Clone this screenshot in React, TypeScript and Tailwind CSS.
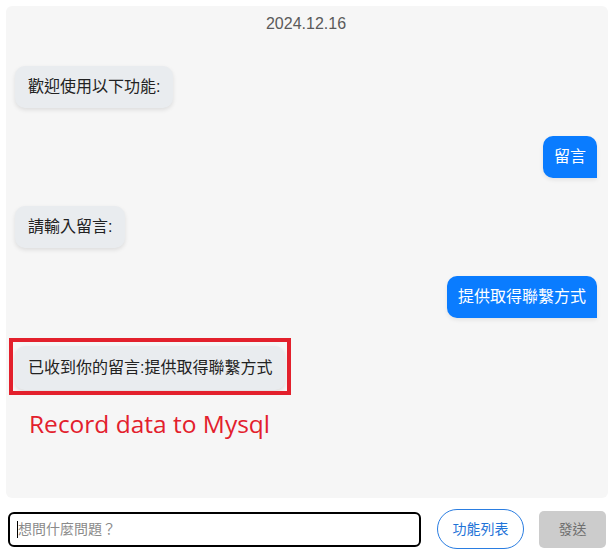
import React from "react";

const font = "font-['Liberation_Sans','Noto_Sans_CJK_TC',sans-serif]";

function Left({ text }: { text: string }) {
  return (
    <div className="flex">
      <div className="h-[42px] px-[13px] flex items-center rounded-[10px] bg-[#e9ecef] text-[16px] leading-[24px] text-[#222] shadow-[0_2px_4px_rgba(0,0,0,0.1)]">
        {text}
      </div>
    </div>
  );
}

function Right({ text }: { text: string }) {
  return (
    <div className="flex justify-end">
      <div className="h-[42px] px-[11px] flex items-center rounded-[10px] rounded-br-none bg-[#0a7cff] text-[16px] leading-[24px] text-white shadow-[0_2px_4px_rgba(0,0,0,0.08)]">
        {text}
      </div>
    </div>
  );
}

export default function App() {
  return (
    <div className={`w-[614px] h-[559px] bg-white ${font} flex flex-col`}>
      <div className="mx-[6px] mt-[6px] h-[492px] bg-[#f6f6f6] rounded-[6px] pl-[9px] pr-[11px] pt-[6px] flex flex-col gap-[28px]">
        <div className="text-center text-[16px] leading-[24px] text-[#5a5a5a] mb-[2px]">2024.12.16</div>
        <Left text="歡迎使用以下功能:" />
        <Right text="留言" />
        <Left text="請輸入留言:" />
        <Right text="提供取得聯繫方式" />
        <div className="flex flex-col">
          <div className="flex">
            <div className="relative">
              <div className="h-[44px] px-[13px] flex items-center rounded-[10px] bg-[#e9ecef] text-[16px] leading-[24px] text-[#222] shadow-[0_2px_4px_rgba(0,0,0,0.1)]">
                已收到你的留言:提供取得聯繫方式
              </div>
              <div className="absolute left-[-6px] right-[-6px] top-[-8px] bottom-[-5px] border-[4px] border-[#e3202c]"></div>
            </div>
          </div>
          <div className="mt-[18px] pl-[14px] text-[24.5px] leading-[32px] text-[#e3202c] font-['Open_Sans',sans-serif]">
            Record data to Mysql
          </div>
        </div>
      </div>
      <div className="flex items-center mt-[11px] px-[8px]">
        <div className="relative w-[413px] h-[35px]">
          <input
            className="w-full h-full border-2 border-black rounded-[6px] pl-[8px] text-[14px] text-[#333] placeholder:text-[#8a8a8a] outline-none bg-white"
            placeholder="想問什麼問題？"
          />
          <div className="absolute left-[9px] top-[9px] w-[1px] h-[17px] bg-black"></div>
        </div>
        <button className="ml-[16px] w-[87px] h-[40px] rounded-full border border-[#2a7de1] text-[#1f74d8] text-[14px] bg-white">
          功能列表
        </button>
        <button className="ml-[15px] w-[67px] h-[37px] rounded-[5px] bg-[#cccccc] text-[#6f6f6f] text-[14px]">
          發送
        </button>
      </div>
    </div>
  );
}
